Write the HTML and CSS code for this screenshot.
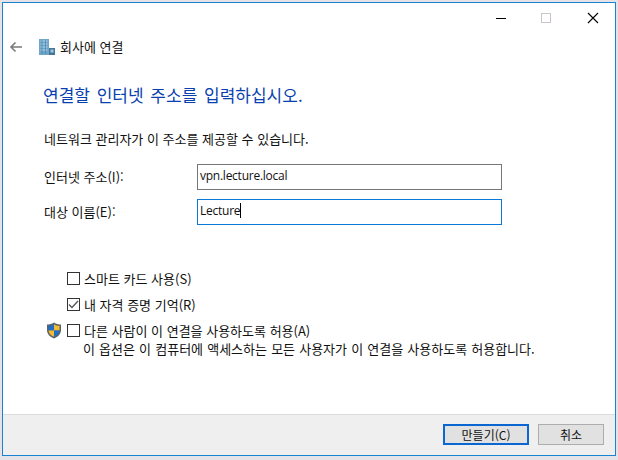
FILE: index.html
```html
<!DOCTYPE html>
<html lang="ko">
<head>
<meta charset="utf-8">
<title>회사에 연결</title>
<link rel="stylesheet" href="styles.css">
</head>
<body>
<div class="window">
  <div class="titlebar">
    <svg class="cap" width="12" height="12" viewBox="0 0 12 12"><path d="M1 6.500H11" stroke="#000" stroke-width="1"/></svg>
    <svg class="cap maxi" width="12" height="12" viewBox="0 0 12 12"><rect x="1.500" y="1.500" width="9" height="9" fill="none" stroke="#ccc4cc"/></svg>
    <svg class="cap" width="12" height="12" viewBox="0 0 12 12"><path d="M1 1L11 11M11 1L1 11" stroke="#000" stroke-width="1.100"/></svg>
  </div>
  <div class="navbar">
    <svg class="back" width="14" height="12" viewBox="0 0 14 12"><path d="M13 6H2M6.500 1.500L2 6L6.500 10.500" fill="none" stroke="#7a7a7a" stroke-width="1.600"/></svg>
    <svg class="appicon" width="16" height="16" viewBox="0 0 16 16">
      <rect x="0" y="0" width="10" height="16" fill="#6ea5c9"/>
      <path d="M1.500 2H8.500M1.500 5H8.500M1.500 8H8.500M1.500 11H8.500" stroke="#b4d8ec" stroke-width="1"/>
      <path d="M3 1V15M6.500 1V15" stroke="#4f88ae" stroke-width=".8"/>
      <rect x="10" y="9" width="6" height="7" fill="#46769a"/>
      <rect x="11.500" y="10.500" width="3" height="3" fill="#9cc9e2"/>
    </svg>
    <span class="navtitle">회사에 연결</span>
  </div>
  <main class="content">
    <h1 class="heading">연결할 인터넷 주소를 입력하십시오.</h1>
    <p class="hint">네트워크 관리자가 이 주소를 제공할 수 있습니다.</p>
    <div class="fields">
      <label class="lbl">인터넷 주소(I):</label>
      <div class="input">vpn.lecture.local</div>
      <label class="lbl">대상 이름(E):</label>
      <div class="input focus">Lecture<span class="caret"></span></div>
    </div>
    <div class="options">
      <div class="opt"><span class="box"></span><span>스마트 카드 사용(S)</span></div>
      <div class="opt"><span class="box"><svg width="13" height="13" viewBox="0 0 13 13"><path d="M2 6.500L5 9.500L11 3" fill="none" stroke="#555" stroke-width="1.300"/></svg></span><span>내 자격 증명 기억(R)</span></div>
      <div class="opt shielded">
        <svg class="shield" width="16" height="17" viewBox="0 0 16 17">
          <path d="M8 .5C6 2 3.500 2.500 1 2.500V8C1 12 4 15 8 16.500C12 15 15 12 15 8V2.500C12.500 2.500 10 2 8 .5Z" fill="#59626b"/>
          <path d="M8 2.200V8.500H2.500V3.800C4.500 3.700 6.500 3.200 8 2.200Z" fill="#1f6fc9"/>
          <path d="M8 2.200C9.500 3.200 11.500 3.700 13.500 3.800V8.500H8Z" fill="#f4bd2e"/>
          <path d="M2.500 8.500H8V14.800C5 13.500 2.700 11.500 2.500 8.500Z" fill="#f4bd2e"/>
          <path d="M8 8.500H13.500C13.300 11.500 11 13.500 8 14.800Z" fill="#1f6fc9"/>
        </svg>
        <span class="box"></span><span>다른 사람이 이 연결을 사용하도록 허용(A)</span>
      </div>
      <p class="note">이 옵션은 이 컴퓨터에 액세스하는 모든 사용자가 이 연결을 사용하도록 허용합니다.</p>
    </div>
  </main>
  <footer class="footer">
    <button class="btn primary">만들기(C)</button>
    <button class="btn">취소</button>
  </footer>
</div>
</body>
</html>
```
FILE: styles.css
```css
html, body { margin: 0; padding: 0; }
body {
  width: 618px;
  height: 460px;
  overflow: hidden;
  background: #e6e3e8;
  font-family: "Noto Sans CJK KR", "Open Sans", sans-serif;
  font-size: 13px;
  color: #111;
}
.window {
  box-sizing: border-box;
  width: 614px;
  height: 454px;
  margin: 2px 0 0 2px;
  border: 1px solid #1a82d2;
  background: #fff;
  display: flex;
  flex-direction: column;
}
.titlebar {
  height: 27px;
  display: flex;
  justify-content: flex-end;
  align-items: center;
  gap: 33px;
  padding: 0 16px 0 0;
}
.cap { display: block; margin-top: 2px; }
.maxi { margin-right: 2px; }
.navbar {
  display: flex;
  align-items: center;
  height: 34px;
  padding-left: 6px;
}
.back { margin-right: 16px; }
.appicon { margin-right: 5px; }
.navtitle { line-height: 16px; }
.content {
  flex: 1;
  padding: 0 0 0 41px;
}
.heading {
  margin: 20px 0 0 -1px;
  font-size: 17px;
  font-weight: 400;
  word-spacing: 2px;
  line-height: 22px;
  color: #0a3fb0;
}
.hint { margin: 24px 0 0 0; line-height: 18px; }
.fields {
  display: grid;
  grid-template-columns: 153px 305px;
  row-gap: 9px;
  margin-top: 16px;
  align-items: center;
}
.lbl { line-height: 18px; }
.input {
  box-sizing: border-box;
  height: 26px;
  border: 1px solid #767676;
  padding: 0 2px;
  font-family: "Open Sans", "Noto Sans", sans-serif;
  font-size: 12px;
  letter-spacing: -.25px;
  line-height: 21px;
}
.input.focus { border-color: #0a78d7; }
.caret {
  display: inline-block;
  width: 1px;
  height: 15px;
  background: #000;
  vertical-align: -3px;
}
.options { margin: 45px 0 0 0; }
.opt {
  display: flex;
  align-items: center;
  gap: 4px;
  height: 17px;
  margin: 0 0 9px 23px;
  line-height: 17px;
}
.box {
  box-sizing: border-box;
  width: 13px;
  height: 13px;
  border: 1px solid #333;
  background: #fff;
  display: block;
  flex: none;
}
.box svg { display: block; margin: -1px; }
.shielded { position: relative; }
.shield { position: absolute; left: -21px; top: 0; }
.note { margin: -8px 0 0 39px; line-height: 18px; word-spacing: .5px; }
.footer {
  height: 41px;
  box-sizing: border-box;
  background: #efefef;
  border-top: 1px solid #dcdcdc;
  display: flex;
  justify-content: flex-end;
  align-items: center;
  gap: 9px;
  padding: 0 11px 2px 0;
}
.btn {
  box-sizing: border-box;
  width: 66px;
  height: 21px;
  border: 1px solid #adadad;
  background: #e1e1e1;
  font: inherit;
  font-size: 12px;
  line-height: 17px;
  padding: 0;
  color: #111;
}
.btn.primary { width: 86px; border: 2px solid #0a66d0; }
```
